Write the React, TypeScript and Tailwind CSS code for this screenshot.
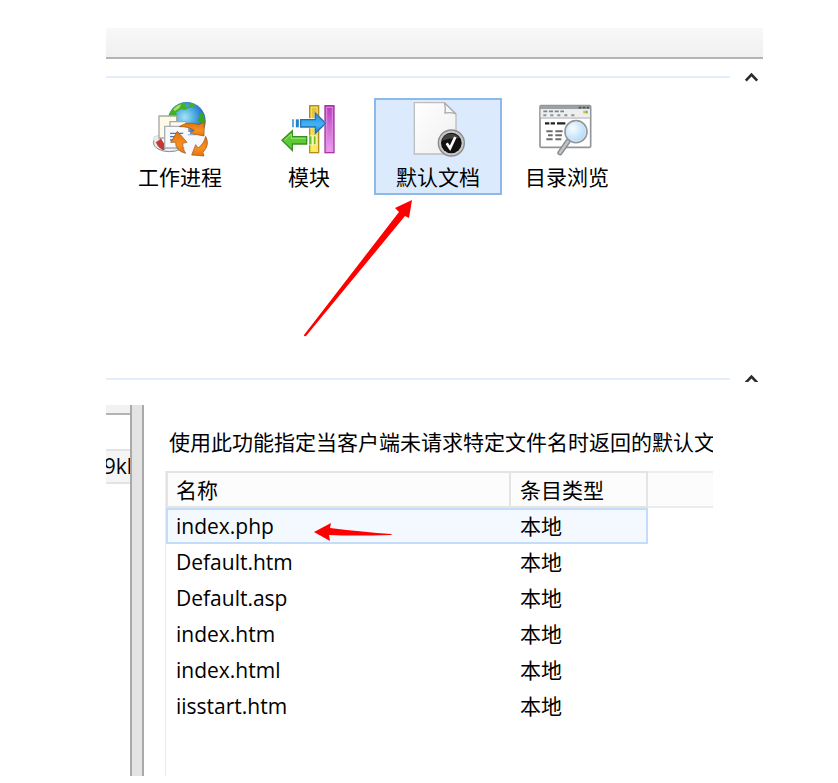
import React, { useState } from "react";

interface DocumentRow {
  name: string;
  type: string;
}

interface FeatureProps {
  label: string;
  icon: React.ReactNode;
  selected: boolean;
  onSelect: () => void;
  children?: React.ReactNode;
}

const documents: DocumentRow[] = [
  { name: "index.php", type: "本地" },
  { name: "Default.htm", type: "本地" },
  { name: "Default.asp", type: "本地" },
  { name: "index.htm", type: "本地" },
  { name: "index.html", type: "本地" },
  { name: "iisstart.htm", type: "本地" },
];

const WorkerIcon = () => (
  <svg className="h-14 w-14" viewBox="36 36 168 168">
    <defs>
      <radialGradient id="globe" cx="0.45" cy="0.4" r="0.65">
        <stop offset="0" stopColor="#a5e3f5" />
        <stop offset="0.5" stopColor="#3d9edb" />
        <stop offset="1" stopColor="#1d3fb0" />
      </radialGradient>
      <linearGradient id="orange" x1="0" y1="0" x2="0" y2="1">
        <stop offset="0" stopColor="#e0710c" />
        <stop offset="0.6" stopColor="#f98f20" />
        <stop offset="1" stopColor="#e57510" />
      </linearGradient>
    </defs>
    <circle cx="140" cy="93" r="57" fill="url(#globe)" />
    <path d="M84 88 Q88 52 125 39 L138 37 L133 48 L146 50 L152 40 L166 44 L160 52 L146 54 L134 60 L122 58 L108 68 L112 78 L98 84 Z" fill="#43b026" />
    <path d="M100 58 Q110 46 124 43 L118 54 L104 64 Z" fill="#a9e26a" />
    <path d="M178 74 L186 66 Q199 88 194 110 L184 98 L174 92 Z" fill="#3ba528" />
    <ellipse cx="88" cy="158" rx="48" ry="27" fill="#eceef2" stroke="#7f8d9d" strokeWidth="3" />
    <ellipse cx="92" cy="152" rx="30" ry="14" fill="#fff" stroke="#b8c0ca" strokeWidth="2" />
    <path d="M46 150 Q52 142 62 144 L78 170 Q76 180 68 180 Q50 172 46 150 Z" fill="#c33a30" />
    <path d="M42 140 Q38 150 45 159 L60 148 L56 136 Z" fill="#e9ebee" stroke="#a3a9b0" strokeWidth="1" />
    <path d="M57 78 H110 V144 H57 Z" fill="#fdfaea" stroke="#a9a9a0" strokeWidth="4" />
    <path d="M90 95 H138 V150 H90 Z" fill="#fdfaea" stroke="#a9a9a0" strokeWidth="4" />
    <path d="M74 109 H146 V174 H74 Z" fill="#f8fafd" stroke="#a9adb5" strokeWidth="4" />
    <path d="M90 130 H130 M90 140 H120 M90 150 H114" stroke="#4877b6" strokeWidth="4" />
    <path d="M124 134 Q145 116 184 138 Q194 168 166 186 Q132 188 124 160 Z" fill="#f7f8fb" />
    <path d="M144 134 H168" stroke="#9bbce8" strokeWidth="4" />
    <path d="M118 110 Q144 92 176 104 L193 96 L192 138 L150 130 L163 121 Q144 109 118 110 Z" fill="url(#orange)" stroke="#8f5220" strokeWidth="2" />
    <path d="M112 124 L141 157 L128 160 Q127 177 137 190 Q105 182 107 157 L92 157 Z" fill="url(#orange)" stroke="#8f5220" strokeWidth="2" />
    <path d="M197 139 Q211 164 189 187 L192 198 L155 195 L167 164 L174 174 Q192 162 197 139 Z" fill="url(#orange)" stroke="#8f5220" strokeWidth="2" />
  </svg>
);

const ModuleIcon = () => (
  <svg className="h-14 w-14" viewBox="33 36 168 168">
    <defs>
      <linearGradient id="yellow" x1="0" y1="0" x2="0" y2="1">
        <stop offset="0" stopColor="#e3bd31" />
        <stop offset="1" stopColor="#fff45a" />
      </linearGradient>
      <linearGradient id="purple" x1="0" y1="0" x2="0" y2="1">
        <stop offset="0" stopColor="#b93bbd" />
        <stop offset="1" stopColor="#efa2ef" />
      </linearGradient>
      <linearGradient id="blueArrow" x1="0" y1="0" x2="0" y2="1">
        <stop offset="0" stopColor="#2b8ddd" />
        <stop offset="0.6" stopColor="#41b4f5" />
        <stop offset="1" stopColor="#1c78c4" />
      </linearGradient>
    </defs>
    <rect x="119" y="47" width="27" height="141" fill="url(#yellow)" stroke="#b28d1d" strokeWidth="4" />
    <rect x="124" y="52" width="17" height="131" fill="none" stroke="#f5df77" strokeWidth="3" />
    <rect x="165" y="47" width="27" height="141" fill="url(#purple)" stroke="#a23ba6" strokeWidth="4" />
    <rect x="170" y="52" width="17" height="131" fill="none" stroke="#df8fe0" strokeWidth="3" />
    <path d="M88 85 H134 V65 L170 100 L134 134 V115 H88 Z" fill="#fff" />
    <path d="M92 89 H136 V69 L167 100 L136 130 V111 H92 Z" fill="url(#blueArrow)" stroke="#2770ad" strokeWidth="4" />
    <path d="M69 88 V112" stroke="#4294d2" strokeWidth="5" />
    <path d="M82 88 V112" stroke="#2181ca" strokeWidth="9" />
    <path d="M112 136 H140 V166 H112 Z" fill="#fff" opacity="0.6" />
    <path d="M36 151 L67 122 V140 H110 V162 H67 V181 Z" fill="#5ecb35" stroke="#35921e" strokeWidth="4" />
    <path d="M44 151 L64 132 V145 H107" fill="none" stroke="#9ae96c" strokeWidth="3" />
    <path d="M121 139 V163" stroke="#66c32a" strokeWidth="7" />
    <path d="M134 139 V163" stroke="#72b928" strokeWidth="5" />
  </svg>
);

const DocumentIcon = () => (
  <svg className="h-14 w-14" viewBox="120 36 168 168">
    <defs>
      <linearGradient id="paper" x1="0" y1="0" x2="1" y2="1">
        <stop offset="0" stopColor="#ffffff" />
        <stop offset="1" stopColor="#efefef" />
      </linearGradient>
    </defs>
    <path d="M133 38 H223 L258 72 V192 H133 Z" fill="url(#paper)" stroke="#bcbec0" strokeWidth="4" />
    <path d="M223 38 Q228 54 225 69 Q242 66 258 72 Z" fill="#f8f8f8" stroke="#aaadb0" strokeWidth="4" />
    <circle cx="244" cy="159" r="41" fill="#8a8a8a" />
    <circle cx="244" cy="159" r="37" fill="#c7c7c7" />
    <circle cx="244" cy="159" r="31" fill="#101010" />
    <path d="M216 152 Q220 132 244 131 Q262 132 268 145 Q240 144 216 152 Z" fill="#414141" />
    <path d="M230 160 L240 175 L256 141" fill="none" stroke="#fff" strokeWidth="8" />
  </svg>
);

const BrowseIcon = () => (
  <svg className="h-14 w-14" viewBox="57 36 168 168">
    <defs>
      <radialGradient id="lens" cx="0.35" cy="0.35" r="0.75">
        <stop offset="0" stopColor="#f7fcff" />
        <stop offset="1" stopColor="#a9d5f7" />
      </radialGradient>
    </defs>
    <rect x="60" y="47" width="152" height="125" rx="3" fill="#fff" stroke="#929699" strokeWidth="5" />
    <path d="M60 47 H211 V58 H60 Z" fill="#9ba0a5" />
    <path d="M62 58 H209 V82 H62 Z" fill="#eceeef" />
    <path d="M176 53 H184 M188 53 H196 M200 53 H207" stroke="#4d545b" strokeWidth="5" />
    <path d="M70 64 H132" stroke="#7f8386" strokeWidth="5" strokeDasharray="12 5" />
    <path d="M70 76 H164" stroke="#909497" strokeWidth="6" strokeDasharray="9 12" />
    <path d="M190 66 H197" stroke="#e9b63e" strokeWidth="8" />
    <path d="M197 66 H203" stroke="#72b34b" strokeWidth="8" />
    <path d="M62 84 H209" stroke="#a4a7a9" strokeWidth="3" />
    <path d="M75 100 H136" stroke="#222" strokeWidth="7" strokeDasharray="13 4 13 6 26" />
    <path d="M79 124 H98 M106 124 H128 M84 136 H98 M106 136 H126 M79 148 H98 M106 148 H124" stroke="#6c6c6c" strokeWidth="6" />
    <path d="M144 154 L120 188" stroke="#85898c" strokeWidth="16" strokeLinecap="round" />
    <path d="M144 154 L120 188" stroke="#c0c3c5" strokeWidth="8" strokeLinecap="round" />
    <circle cx="168" cy="125" r="33" fill="url(#lens)" stroke="#92979b" strokeWidth="5" />
    <circle cx="168" cy="125" r="29" fill="none" stroke="#d9e9f4" strokeWidth="3" />
  </svg>
);

const GroupDivider = ({ className }: { className?: string }) => (
  <div className={`flex items-center gap-3.5 pr-1 ${className || ""}`}>
    <div className="h-0.5 flex-1 bg-[#e4edfb]" />
    <button className="flex h-5 w-[15px] items-center justify-center" aria-label="收起">
      <svg className="h-2.5 w-[15px]" viewBox="0 0 15 10" fill="none" stroke="#2b2b2b" strokeWidth="2.6">
        <path d="M1.8 8.6 L7.5 2.6 L13.2 8.6" />
      </svg>
    </button>
  </div>
);

const Feature = ({ label, icon, selected, onSelect, children }: FeatureProps) => {
  return (
    <li className="relative w-32">
      <button
        className={`flex w-full flex-col items-center border-2 py-0.5 ${
          selected ? "border-[#8db9e8] bg-[#dceafd]" : "border-transparent"
        }`}
        onClick={onSelect}
      >
        {icon}
        <span className="mt-[5px] leading-7">{label}</span>
      </button>
      {children}
    </li>
  );
};

const App = () => {
  const [selected, setSelected] = useState("默认文档");

  const features = [
    { label: "工作进程", icon: <WorkerIcon /> },
    { label: "模块", icon: <ModuleIcon /> },
    { label: "默认文档", icon: <DocumentIcon /> },
    { label: "目录浏览", icon: <BrowseIcon /> },
  ];

  return (
    <main className="bg-white py-7 pl-[106px] pr-[75px] font-['Open_Sans','Noto_Sans_CJK_SC',sans-serif] text-[21px] text-black">
      <section className="overflow-hidden">
        <div className="h-[31px] border-b-2 border-[#b4b4b4] bg-linear-to-b from-[#f8f8f8] to-[#f0f0f0]" />
        <GroupDivider className="mt-2" />
        <ul className="mt-[11px] flex gap-px pb-[174px] pl-2.5">
          {features.map((item) => (
            <Feature
              key={item.label}
              label={item.label}
              icon={item.icon}
              selected={selected === item.label}
              onSelect={() => setSelected(item.label)}
            >
              {item.label === "默认文档" && (
                <svg className="pointer-events-none absolute -left-[74px] top-[100px] h-[140px] w-[115px]" viewBox="0 0 115 140">
                  <path d="M112 2 L95 10 L99 14 L4 137 Q4 139 6 138 L105 18 L109 20 Z" fill="#fe0000" />
                </svg>
              )}
            </Feature>
          ))}
        </ul>
        <GroupDivider className="-mb-[7px]" />
      </section>

      <section className="mr-[50px] mt-[23px] flex overflow-hidden">
        <aside className="w-6 overflow-hidden">
          <div className="h-2.5 border-b-2 border-[#b4b4b4] bg-[#f2f2f2]" />
          <div className="mt-[34px] flex h-[35px] items-center justify-center border-y-2 border-[#e3e3e3] bg-[#f5f5f5]">
            9kl
          </div>
        </aside>
        <div className="w-3.5 border-x-2 border-[#a9a9a9] bg-[#e3e3e3]" />
        <div className="min-w-0 flex-1 pl-[21px] pt-[22px]">
          <p className="overflow-hidden whitespace-nowrap pl-1 leading-[30px]">
            使用此功能指定当客户端未请求特定文件名时返回的默认文件
          </p>
          <div className="mt-3.5 min-h-[305px] border-l border-[#ececec]">
            <table className="w-full table-fixed border-separate border-spacing-0 text-left">
              <thead>
                <tr className="h-[37px] bg-[#fcfcfc]">
                  <th className="w-[345px] border-2 border-[#e4e4e4] py-0 pl-2 font-normal leading-8">名称</th>
                  <th className="w-[137px] border-y-2 border-r-2 border-[#e4e4e4] py-0 pl-[9px] font-normal leading-8">条目类型</th>
                  <td className="border-y-2 border-[#ececec]" />
                </tr>
              </thead>
              <tbody>
                {documents.map((doc, index) => (
                  <tr key={doc.name} className="h-9">
                    <td
                      className={`relative border-y-2 border-l-2 py-0 pl-2 leading-8 ${
                        index === 0 ? "border-[#c3dcfa] bg-[#f4f9ff]" : "border-transparent"
                      }`}
                    >
                      {doc.name}
                      {index === 0 && (
                        <svg className="pointer-events-none absolute left-[146px] top-[13px] h-5 w-20" viewBox="0 0 80 20">
                          <path d="M0 9 L17 0 L16 5 Q50 9 77 11 Q79 12 76 12 Q40 13 15 12 L16 18 Z" fill="#fe0000" />
                        </svg>
                      )}
                    </td>
                    <td
                      className={`border-y-2 border-r-2 py-0 pl-[9px] leading-8 ${
                        index === 0 ? "border-[#c3dcfa] bg-[#f4f9ff]" : "border-transparent"
                      }`}
                    >
                      {doc.type}
                    </td>
                    <td />
                  </tr>
                ))}
              </tbody>
            </table>
          </div>
        </div>
      </section>
    </main>
  );
};

export default App;
